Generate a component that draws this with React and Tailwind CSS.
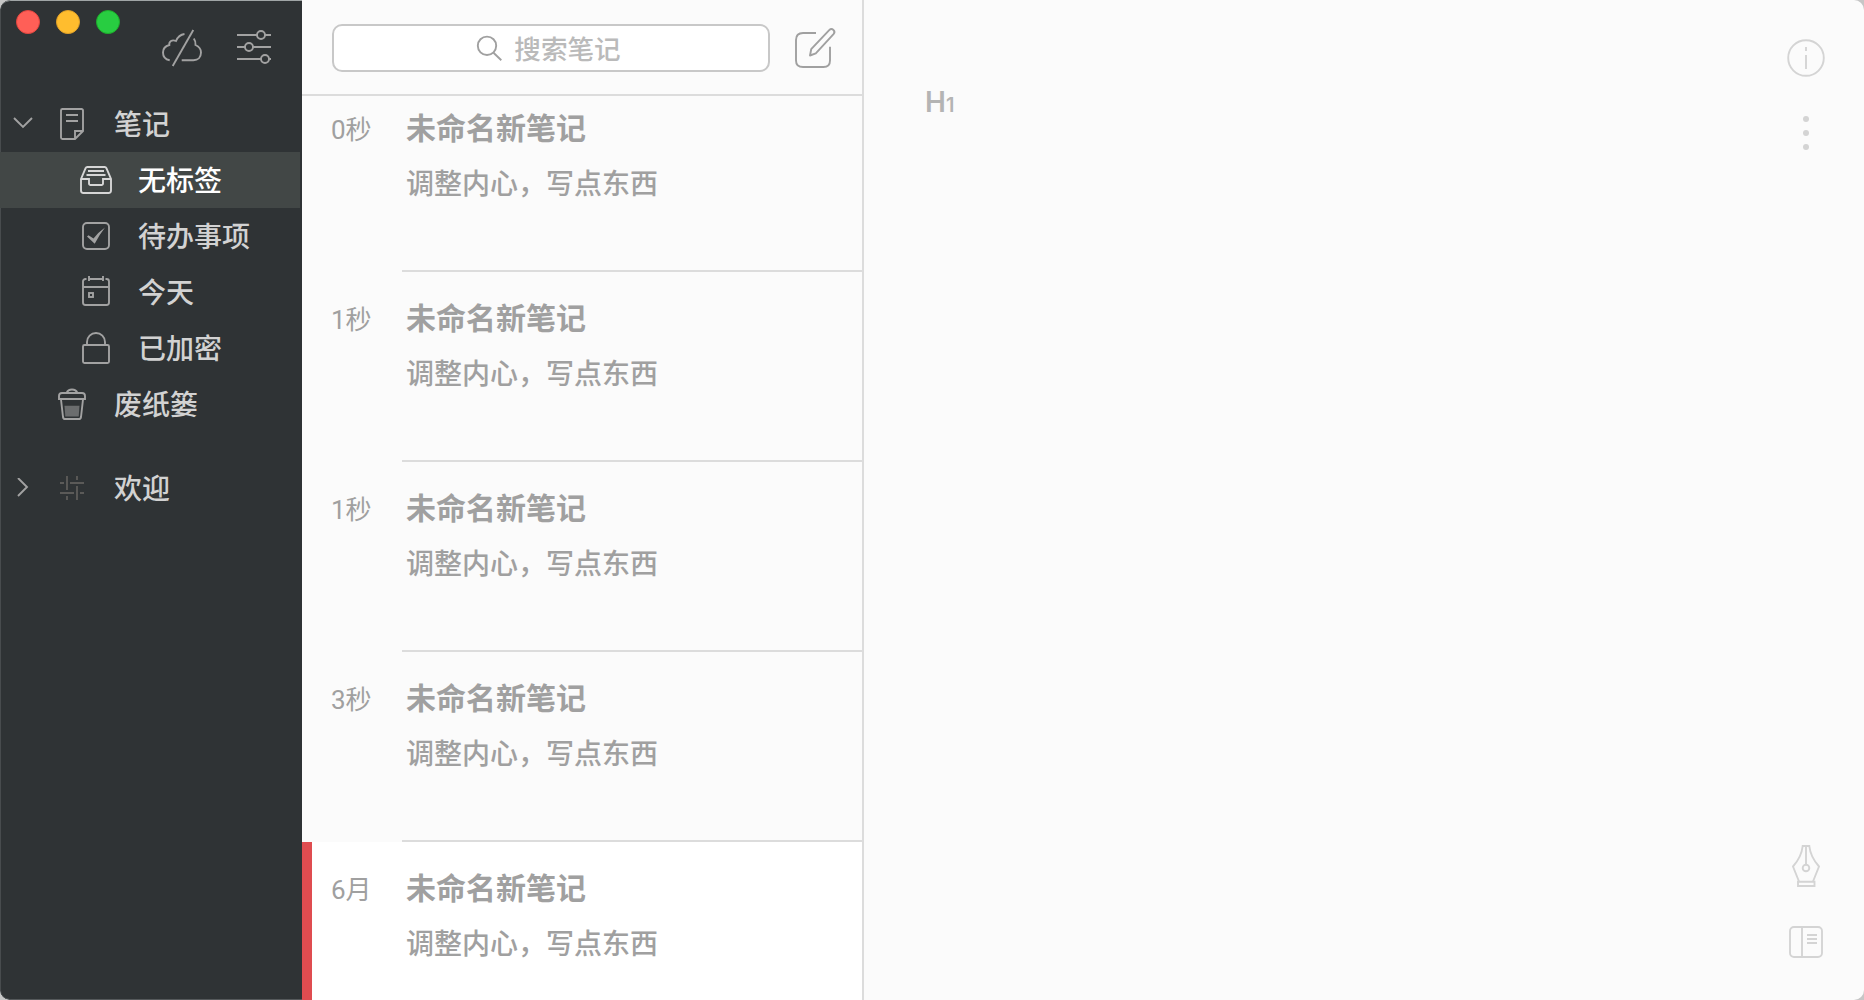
import React, { useState } from "react";

const notes = [
  { id: 1, time: "0秒", title: "未命名新笔记", body: "调整内心，写点东西" },
  { id: 2, time: "1秒", title: "未命名新笔记", body: "调整内心，写点东西" },
  { id: 3, time: "1秒", title: "未命名新笔记", body: "调整内心，写点东西" },
  { id: 4, time: "3秒", title: "未命名新笔记", body: "调整内心，写点东西" },
  { id: 5, time: "6月", title: "未命名新笔记", body: "调整内心，写点东西" },
];

function Icon({ size = 40, children, className = "" }) {
  return (
    <svg
      width={size}
      height={size}
      viewBox={`0 0 ${size} ${size}`}
      fill="none"
      stroke="currentColor"
      strokeWidth="1.9"
      className={`shrink-0 ${className}`}
    >
      {children}
    </svg>
  );
}

const NoteIcon = () => (
  <Icon>
    <path d="M10.5 5H29.5a1.5 1.5 0 0 1 1.5 1.5V27L23 35H10.5a1.5 1.5 0 0 1-1.5-1.5V6.5a1.5 1.5 0 0 1 1.5-1.5ZM23 35V27H31M14 11H26M14 17H26" />
  </Icon>
);

const TrayIcon = () => (
  <Icon>
    <path d="M5 19L9.6 8.2A2 2 0 0 1 11.4 7H28.6A2 2 0 0 1 30.4 8.2L35 19V30.5A2.5 2.5 0 0 1 32.5 33H7.5A2.5 2.5 0 0 1 5 30.5Z" />
    <path d="M5 19H13V23.5A1.5 1.5 0 0 0 14.5 25H25.5A1.5 1.5 0 0 0 27 23.5V19H35M12 11H28M10.5 15H29.5" />
  </Icon>
);

const CheckIcon = () => (
  <Icon>
    <rect x="7" y="7" width="26" height="26" rx="4" />
    <path d="M11 20.5L12.5 19.2L17.5 22.5Q22.5 16 29 11.5Q23.5 18.5 18.7 27.8Z" fill="currentColor" stroke="none" />
  </Icon>
);

const CalendarIcon = () => (
  <Icon>
    <path d="M10.5 7H9.5A2.5 2.5 0 0 0 7 9.5V30.5A2.5 2.5 0 0 0 9.5 33H30.5A2.5 2.5 0 0 0 33 30.5V9.5A2.5 2.5 0 0 0 30.5 7H29.5M13 7H27M7 15H33M13 4V9M27 4V9" />
    <rect x="13" y="21" width="4" height="4" />
  </Icon>
);

const LockIcon = () => (
  <Icon>
    <rect x="7" y="17" width="26" height="18" rx="1.5" />
    <path d="M11 17V14A9 9 0 0 1 29 14V17" />
  </Icon>
);

const TrashIcon = () => (
  <Icon>
    <path d="M14.5 9Q16 5.5 20 5.5T25.5 9" />
    <path d="M7 15V12Q7 9 10 9H30Q33 9 33 12V15Z" />
    <path d="M9 15.5L11 33Q11.3 35 13 35H27Q28.7 35 29 33L31 15.5" />
    <path d="M12.5 21.7H27.5L26.7 32.5H13.3Z" fill="#6b6d6e" stroke="none" />
  </Icon>
);

const TagIcon = () => (
  <Icon className="text-[#5b5a58]">
    <path d="M15 8V22M15 28V32M25 8V12M25 18V32M8 15H12M18 15H32M8 25H22M28 25H32" />
  </Icon>
);

const CloudOffIcon = () => (
  <Icon>
    <path d="M31.3 2L10.7 38" />
    <path d="M7.7 32.3C3.5 31.5 1 28.5 1 24.5C1 20.5 3.5 18 7.3 17C6.8 13.5 10 11.2 14 13C15.5 9.5 18.5 6.5 22.5 6" />
    <path d="M31.8 10.5Q34 13.5 33.5 17C37 18.5 39 21 39 24.5C39 29 36 32.2 31.5 32.2H19.7" />
  </Icon>
);

const SlidersIcon = () => (
  <Icon>
    <path d="M3 7H23M31 7H37M3 19H11M19 19H37M3 31H27M35 31H37" />
    <circle cx="27" cy="7" r="4" />
    <circle cx="15" cy="19" r="4" />
    <circle cx="31" cy="31" r="4" />
  </Icon>
);

const ChevronDown = () => (
  <Icon size={20}>
    <path d="M1 4L10 13L19 4" />
  </Icon>
);

const ChevronRight = () => (
  <Icon size={20}>
    <path d="M5 0L14 9L5 18" />
  </Icon>
);

const SearchIcon = () => (
  <Icon size={26}>
    <circle cx="11" cy="10.8" r="9.2" />
    <path d="M17.5 17.8L25.3 25.3" />
  </Icon>
);

const ComposeIcon = () => (
  <Icon size={44}>
    <path d="M23 7H10Q3 7 3 14V34.5Q3 41 10 41H30.5Q37 41 37 34.5V20.7" />
    <path d="M17 29.5L18.2 23.2L36.2 4.2C39 1.4 43.2 5 40.5 8.2L22.8 27.3Z" strokeLinejoin="round" />
  </Icon>
);

const InfoIcon = () => (
  <Icon size={44}>
    <circle cx="22" cy="22" r="17.8" />
    <path d="M22 11V15M22 19V33" />
  </Icon>
);

const MoreIcon = () => (
  <Icon size={44}>
    <g fill="currentColor" stroke="none">
      <circle cx="22" cy="8" r="3" />
      <circle cx="22" cy="22" r="3" />
      <circle cx="22" cy="36" r="3" />
    </g>
  </Icon>
);

const PenIcon = () => (
  <Icon size={44}>
    <path d="M15 37.5L9 22.5Q17.5 13 18.7 2H25.3Q26.5 13 35 22.5L29 37.5" />
    <path d="M14 37.8H30.5V42H14ZM22 2V20.5" />
    <circle cx="22" cy="24" r="3.3" />
  </Icon>
);

const PanelIcon = () => (
  <Icon size={44}>
    <rect x="6" y="7" width="32" height="30" rx="4" />
    <path d="M18 7V37M23 15H33M23 19H33M23 23H33" />
  </Icon>
);

function NavRow({ icon, label, child, chevron, selected, onClick }) {
  return (
    <button
      onClick={onClick}
      className={`flex h-14 items-center text-left text-[28px] leading-none font-medium ${
        selected ? "mr-0.5 bg-[#424746] text-white" : "text-[#d2d2d2]"
      }`}
    >
      <span className={`flex shrink-0 justify-center ${child ? "w-[70px]" : "w-[46px] text-[#a2a2a2]"}`}>
        {chevron}
      </span>
      <span className={`flex w-[52px] shrink-0 justify-center ${selected ? "text-[#d6d6d6]" : "text-[#a2a2a2]"}`}>
        {icon}
      </span>
      <span className="ml-4 pb-[3px]">{label}</span>
    </button>
  );
}

function Sidebar() {
  const [selected, setSelected] = useState("无标签");
  const children = [
    { label: "无标签", icon: <TrayIcon /> },
    { label: "待办事项", icon: <CheckIcon /> },
    { label: "今天", icon: <CalendarIcon /> },
    { label: "已加密", icon: <LockIcon /> },
  ];

  return (
    <aside className="flex w-[302px] shrink-0 flex-col rounded-l-[10px] bg-[#2f3335] shadow-[inset_1px_0_#484c4e,inset_0_1px_#a0a5a6,inset_0_-1px_#55595b]">
      <div className="flex h-24 items-start text-[#a2a2a2]">
        <div className="flex gap-4 pt-2.5 pl-4">
          <span className="size-6 rounded-full border border-[#e2463f] bg-[#ff5f57]" />
          <span className="size-6 rounded-full border border-[#e0a028] bg-[#ffbd2e]" />
          <span className="size-6 rounded-full border border-[#1dad2b] bg-[#28cd41]" />
        </div>
        <div className="flex gap-8 pt-7 pl-[42px]">
          <CloudOffIcon />
          <SlidersIcon />
        </div>
      </div>
      <nav className="flex flex-col">
        <NavRow icon={<NoteIcon />} label="笔记" chevron={<ChevronDown />} />
        {children.map((item) => (
          <NavRow
            key={item.label}
            child
            icon={item.icon}
            label={item.label}
            selected={selected === item.label}
            onClick={() => setSelected(item.label)}
          />
        ))}
        <NavRow icon={<TrashIcon />} label="废纸篓" />
        <div className="mt-7 flex flex-col">
          <NavRow icon={<TagIcon />} label="欢迎" chevron={<ChevronRight />} />
        </div>
      </nav>
    </aside>
  );
}

function NoteItem({ note, active }) {
  return (
    <li
      className={`flex h-[190px] shrink-0 text-[#a0a0a0] ${
        active ? "border-l-[10px] border-[#df4c50] bg-white pl-[19px]" : "pl-[29px]"
      }`}
    >
      <div className="w-[71px] shrink-0 pt-[30px] font-[Roboto,'Noto_Sans_CJK_SC',sans-serif] text-[26px] leading-[36px]">
        {note.time}
      </div>
      <div className={`flex-1 pt-6 pl-1 ${active ? "" : "border-b-2 border-[#dcdcdc]"}`}>
        <h3 className="text-[30px] leading-10 font-bold">{note.title}</h3>
        <p className="mt-4 text-[28px] leading-10 font-medium">{note.body}</p>
      </div>
    </li>
  );
}

function NoteList() {
  return (
    <section className="flex w-[562px] shrink-0 flex-col border-r-2 border-[#dcdcdc]">
      <header className="flex h-24 shrink-0 items-start border-b-2 border-[#dcdcdc] pt-6 pl-[30px]">
        <div className="flex h-12 w-[438px] items-center justify-center gap-3 rounded-[10px] border-2 border-[#c8c8c8] bg-white pr-[5px] text-[#a0a0a0]">
          <SearchIcon />
          <span className="text-[26.6px] leading-none font-medium text-[#bababa]">搜索笔记</span>
        </div>
        <button className="mt-0.5 ml-[23px] text-[#a0a0a0]">
          <ComposeIcon />
        </button>
      </header>
      <div className="flex-1 overflow-hidden">
        <ul className="-mt-3.5 flex flex-col">
          {notes.map((note) => (
            <NoteItem key={note.id} note={note} active={note.id === 5} />
          ))}
        </ul>
      </div>
    </section>
  );
}

function Editor() {
  return (
    <main className="flex flex-1 justify-between">
      <div className="flex items-baseline pt-[82px] pl-[61px] font-[Inter,sans-serif] font-semibold text-[#b4b4b4]">
        <span className="text-[28px] leading-10">H</span>
        <span className="text-xl leading-10">1</span>
      </div>
      <div className="flex flex-col justify-between pt-9 pr-9 pb-9 text-[#d4d4d4]">
        <div className="flex flex-col gap-[31px]">
          <InfoIcon />
          <MoreIcon />
        </div>
        <div className="flex flex-col gap-8">
          <PenIcon />
          <PanelIcon />
        </div>
      </div>
    </main>
  );
}

export default function App() {
  return (
    <div className="h-screen bg-[#c6c6c6] font-['Noto_Sans_CJK_SC',sans-serif]">
      <div className="flex h-full overflow-hidden rounded-[10px] bg-[#fbfbfb]">
        <Sidebar />
        <NoteList />
        <Editor />
      </div>
    </div>
  );
}
